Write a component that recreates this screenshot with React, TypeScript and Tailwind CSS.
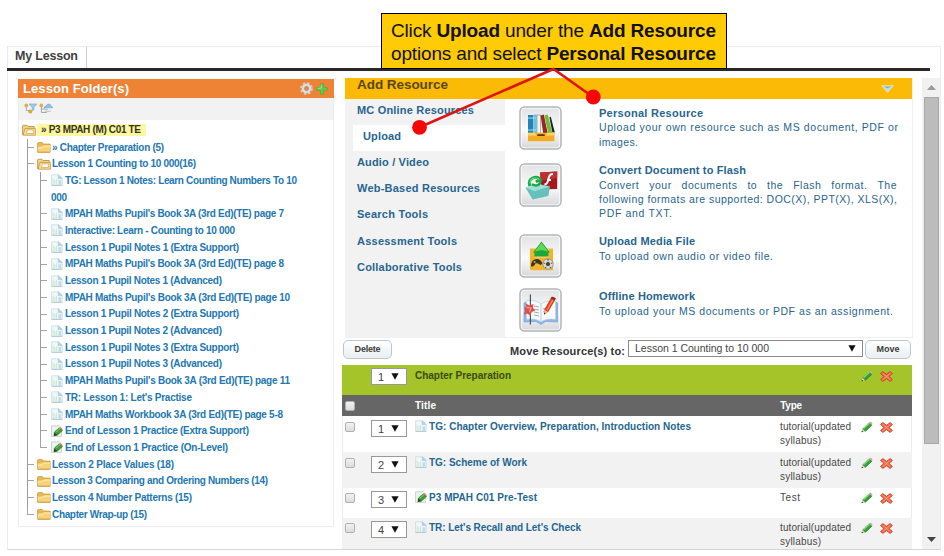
import { useLayoutEffect, useRef, useState, type ReactNode } from "react";

/** One line of text whose tracking is adjusted so that it spans `w` pixels. */
function Fit({ w, className = "", children }: { w: number; className?: string; children: ReactNode }) {
  const ref = useRef<HTMLSpanElement>(null);
  const [tracking, setTracking] = useState(0);
  useLayoutEffect(() => {
    const el = ref.current;
    if (!el) return;
    el.style.letterSpacing = "0px";
    const natural = el.getBoundingClientRect().width;
    const count = (el.textContent ?? "").length;
    const next = (w - natural) / Math.max(count - 1, 1);
    el.style.letterSpacing = `${next}px`;
    setTracking(next);
  }, [w]);
  return (
    <span ref={ref} className={`inline-block whitespace-nowrap ${className}`} style={{ letterSpacing: `${tracking}px` }}>
      {children}
    </span>
  );
}

function OpenFolder() {
  return (
    <svg className="h-[12px] w-[14px] shrink-0" viewBox="0 0 14 12">
      <path d="M.6 11V2.2Q.6 1.3 1.5 1.3H5l1 1.2h6.2v2" fill="#f3d58a" stroke="#b98a32" strokeWidth=".8" />
      <path d="M1 11.2 3 4.4h10.4v6.8z" fill="#f7dc96" stroke="#c4953d" strokeWidth=".8" />
      <path d="M5.4 5.9h6v3.6H4.4z" fill="#fffdf4" stroke="#c9a050" strokeWidth=".6" />
    </svg>
  );
}

function Folder() {
  return (
    <svg className="h-[12px] w-[14px] shrink-0" viewBox="0 0 14 12">
      <path d="M.6 11V2.6Q.6 1.6 1.6 1.6h3.6l1.2 1.5h6.7V11z" fill="#e9b94f" stroke="#c9973a" strokeWidth=".8" />
      <path d="M.8 11V5.4l5.3-.4 1-1h6.1v7z" fill="#f6d27a" />
      <path d="M1 7.4q5-.2 6-2.2h6.2" fill="none" stroke="#fdebb8" strokeWidth=".9" />
      <path d="M.6 11.2h12.7" stroke="#c9912f" strokeWidth=".9" />
    </svg>
  );
}

function Doc() {
  return (
    <svg className="h-[12px] w-[12px] shrink-0" viewBox="0 0 12 12">
      <path d="M.6.8h7l3.6 3.4v7.2H.6z" fill="#f1f8fb" stroke="#c6dbe6" strokeWidth=".8" />
      <path d="M7.2.8v3.8h4z" fill="#a9d6ee" stroke="#9ec5d9" strokeWidth=".5" />
      <path d="M2.2 4.6v6.2M3.9 6v4.8M5.6 5v5.8" stroke="#cbe5c6" strokeWidth=".9" />
      <path d="M7.4 6.2h2.8v4.6H7.4z" fill="#c2dcee" />
      <path d="M.6 11.4h10.6" stroke="#a9c4d4" strokeWidth=".8" />
    </svg>
  );
}

function DocPencil() {
  return (
    <svg className="h-[12px] w-[12px] shrink-0" viewBox="0 0 12 12">
      <path d="M.6.8h7.6l2.2 2v8.6H.6z" fill="#eef6ee" stroke="#b9cbc0" strokeWidth=".8" />
      <path d="M3 10.6 3.4 7 8.2 2.8l3.4 2.8-5.2 4.6z" fill="#3c9c3a" stroke="#286b2b" strokeWidth=".5" />
      <path d="m8.1 2.9 3.3 2.7.5-1.2-2.4-2.4z" fill="#e37a63" />
      <path d="m2.6 11 .9-3.4 2.7 2.5z" fill="#3a3328" />
      <path d="m4.6 7.6 4.6-4.2" stroke="#8ed67a" strokeWidth=".9" />
    </svg>
  );
}

function Pencil() {
  return (
    <svg className="h-[12px] w-[12px]" viewBox="0 0 12 12">
      <path d="m1 10.6.7-3L8.2 1.4l2.9 2.4-6.6 6.4z" fill="#37a03a" />
      <path d="m4.4 10.2 6.7-6.2" stroke="#237a2b" strokeWidth=".8" />
      <path d="M2.6 7.6 8.4 2.2" stroke="#8edb7c" strokeWidth="1.2" />
      <path d="m8 1.6 1-.9q1.6-.2 2.4 1.5l-.5 1.7z" fill="#c4ada6" />
      <path d="m.6 11 .9-3.1 2.4 2.3z" fill="#dfe3b8" />
      <path d="m.5 11.3.4-1.6 1.3 1.1z" fill="#222" />
    </svg>
  );
}

function Cross() {
  return (
    <svg className="h-[11px] w-[13px]" viewBox="0 0 13 11">
      <path
        d="M.7 2.6 2.7.6 6.5 3.4 10.3.6l2 2-3.4 2.9 3.4 2.9-2 2-3.8-2.8-3.8 2.8-2-2 3.4-2.9z"
        fill="#f4714d"
        stroke="#cf3a24"
        strokeWidth="1"
        strokeLinejoin="round"
      />
      <path d="m2.6 2.2 7.8 6.6M10.4 2.2 2.6 8.8" stroke="#fba583" strokeWidth=".7" />
    </svg>
  );
}

/** Connector of a tree row: an elbow, carried on downwards unless the row is the last one. */
function Guide({ last = false }: { last?: boolean }) {
  return (
    <div className={`flex h-full w-[10px] shrink-0 flex-col ${last ? "" : "border-l border-[#9c9c9c]"}`}>
      <div className={`h-[9px] border-b border-[#a4a4a4] ${last ? "w-[7px] border-l" : "w-[6px]"}`} />
    </div>
  );
}

type Leaf = { text: string; w: number; rest?: string; pencil?: boolean };

const leaves: Leaf[] = [
  { text: "TG: Lesson 1 Notes: Learn Counting Numbers To 10", w: 232, rest: "000" },
  { text: "MPAH Maths Pupil's Book 3A (3rd Ed)(TE) page 7", w: 219 },
  { text: "Interactive: Learn - Counting to 10 000", w: 170 },
  { text: "Lesson 1 Pupil Notes 1 (Extra Support)", w: 174 },
  { text: "MPAH Maths Pupil's Book 3A (3rd Ed)(TE) page 8", w: 219 },
  { text: "Lesson 1 Pupil Notes 1 (Advanced)", w: 157 },
  { text: "MPAH Maths Pupil's Book 3A (3rd Ed)(TE) page 10", w: 225 },
  { text: "Lesson 1 Pupil Notes 2 (Extra Support)", w: 174 },
  { text: "Lesson 1 Pupil Notes 2 (Advanced)", w: 157 },
  { text: "Lesson 1 Pupil Notes 3 (Extra Support)", w: 174 },
  { text: "Lesson 1 Pupil Notes 3 (Advanced)", w: 157 },
  { text: "MPAH Maths Pupil's Book 3A (3rd Ed)(TE) page 11", w: 225 },
  { text: "TR: Lesson 1: Let's Practise", w: 127 },
  { text: "MPAH Maths Workbook 3A (3rd Ed)(TE) page 5-8", w: 218 },
  { text: "End of Lesson 1 Practice (Extra Support)", w: 184, pencil: true },
  { text: "End of Lesson 1 Practice (On-Level)", w: 163, pencil: true },
];

const folders = [
  { text: "Lesson 2 Place Values (18)", w: 122 },
  { text: "Lesson 3 Comparing and Ordering Numbers (14)", w: 216 },
  { text: "Lesson 4 Number Patterns (15)", w: 140 },
  { text: "Chapter Wrap-up (15)", w: 95 },
];

function LessonFolders() {
  return (
    <section className="h-[448px] w-[316px] shrink-0 border border-[#ececec]">
      <header className="-mx-px -mt-px flex h-[19px] items-center justify-between bg-[#ee8235] pl-[5px] pr-[6px]">
        <Fit w={106} className="text-[13px] font-bold leading-[19px] text-white">Lesson Folder(s)</Fit>
        <div className="flex items-center gap-[3px]">
          <svg className="h-[13px] w-[13px]" viewBox="0 0 13 13">
            <circle cx="6.5" cy="6.5" r="5.3" fill="none" stroke="#cfcfcf" strokeWidth="2.2" strokeDasharray="2.3 1.86" />
            <circle cx="6.5" cy="6.5" r="3.5" fill="none" stroke="#dcdcdc" strokeWidth="2.6" />
            <circle cx="6.5" cy="6.5" r="1.9" fill="#e08a4a" stroke="#9a9693" strokeWidth=".6" />
          </svg>
          <svg className="h-[12px] w-[12px]" viewBox="0 0 12 12">
            <path d="M4.5.8h3v3.7h3.7v3H7.5v3.7h-3V7.5H.8v-3h3.7z" fill="#62c94b" stroke="#4bae3c" strokeWidth=".7" />
            <path d="M5.2 1.6v3.6H1.6" stroke="#b4ee9d" strokeWidth=".8" fill="none" />
          </svg>
        </div>
      </header>
      <div className="flex h-[22px] items-start gap-[2px] bg-[#f2f2f2] pl-[5px] pt-[5px]">
        <svg className="h-[11px] w-[13px]" viewBox="0 0 13 11">
          <path d="M2.4 3v4.5h3" stroke="#999" fill="none" strokeWidth=".8" />
          <circle cx="2.3" cy="2.5" r="1.9" fill="#dfb04a" />
          <circle cx="6.3" cy="8.5" r="2.1" fill="#d8a93f" />
          <path d="M5 .9h7.8L10 4.6v2.2l-1.8.7V4.6z" fill="#9ccbe9" stroke="#6d9fc4" strokeWidth=".5" />
        </svg>
        <svg className="h-[11px] w-[14px]" viewBox="0 0 14 11">
          <path d="M2.4 3v6.5h5.4M2.4 6h4" stroke="#a0a0a0" fill="none" strokeWidth=".9" />
          <circle cx="2.3" cy="2.5" r="1.9" fill="#dfb04a" />
          <path d="M5 4.8q.3-1.7 2-1.7 1-2.3 3-2 2 .3 2 2.1 1.5.1 1.6 1.6z" fill="#8fc4ea" stroke="#5b93bf" strokeWidth=".5" />
          <path d="M5.8 8.2h6M5.8 6.4h3" stroke="#b7b7b7" strokeWidth=".9" />
        </svg>
      </div>
      <div className="pl-[3px] pt-[2px] text-[10px] font-bold text-[#2377b1]">
        <div className="flex h-[16.7px] items-center">
          <OpenFolder />
          <div className="ml-px flex h-[12px] w-[109px] items-center bg-[#fdf7a0] pl-[4px] text-[#35351c]">
            <Fit w={100} className="leading-[12px]">» P3 MPAH (M) C01 TE</Fit>
          </div>
        </div>
        <div className="pl-[5px]">
          <div className="flex h-[16.7px] items-center">
            <Guide />
            <Folder />
            <Fit w={112} className="ml-[1px]">» Chapter Preparation (5)</Fit>
          </div>
          <div className="flex h-[16.7px] items-center">
            <Guide />
            <OpenFolder />
            <Fit w={144} className="ml-[1px]">Lesson 1 Counting to 10 000(16)</Fit>
          </div>
          <div className="border-l border-[#9c9c9c] pl-[12px]">
            {leaves.map((leaf, i) => (
              <div key={leaf.text} className={`flex ${leaf.rest ? "h-[33.4px]" : "h-[16.7px]"}`}>
                <Guide last={i === leaves.length - 1} />
                <div className="ml-px">
                  <div className="flex h-[16.7px] items-center gap-[2px]">
                    {leaf.pencil ? <DocPencil /> : <Doc />}
                    <Fit w={leaf.w}>{leaf.text}</Fit>
                  </div>
                  {leaf.rest && (
                    <div className="flex h-[16.7px] items-center">
                      <Fit w={16}>{leaf.rest}</Fit>
                    </div>
                  )}
                </div>
              </div>
            ))}
          </div>
          {folders.map((folder, i) => (
            <div key={folder.text} className="flex h-[16.7px] items-center">
              <Guide last={i === folders.length - 1} />
              <Folder />
              <Fit w={folder.w} className="ml-[1px]">{folder.text}</Fit>
            </div>
          ))}
        </div>
      </div>
    </section>
  );
}

const menu = [
  { text: "MC Online Resources", w: 117 },
  { text: "Upload", w: 38, active: true },
  { text: "Audio / Video", w: 72 },
  { text: "Web-Based Resources", w: 123 },
  { text: "Search Tools", w: 71 },
  { text: "Assessment Tools", w: 100 },
  { text: "Collaborative Tools", w: 105 },
];

function Tile({ id, children }: { id: string; children: ReactNode }) {
  return (
    <svg className="h-[44px] w-[43px]" viewBox="0 0 43 44">
      <defs>
        <linearGradient id={id} x1="0" y1="0" x2="0" y2="1">
          <stop offset="0" stopColor="#e3e4e6" />
          <stop offset=".55" stopColor="#fafafa" />
          <stop offset="1" stopColor="#d9dadc" />
        </linearGradient>
      </defs>
      <rect x="1" y="1" width="41" height="42" rx="4.5" fill="#fff" stroke="#b2b4b7" strokeWidth="1.5" />
      <rect x="2.6" y="2.6" width="37.8" height="38.8" rx="3" fill={`url(#${id})`} />
      {children}
    </svg>
  );
}

function BooksIcon() {
  return (
    <Tile id="books">
      <path d="M9 9h5.4v19H9z" fill="#2383b5" />
      <path d="M14.8 8.6h2.8V28h-2.8z" fill="#60c5e4" />
      <path d="M9 12h8.4M9 24h8.4" stroke="#9fe0f3" strokeWidth="1.2" />
      <path d="M18 9h3.6v19H18z" fill="#f4f4ee" stroke="#444" strokeWidth=".4" />
      <path d="m21.6 9.4 3.2-.8 4 19h-4.6z" fill="#9b2521" />
      <path d="m25.4 9.2 3.4-.8 4.6 18.8h-4.2z" fill="#74bb3c" />
      <path d="m30.4 11.2 1.4-.5 4 15.8h-2.4z" fill="#222" />
      <path d="M9 26.8h26.4v7.6q0 .9-.9.9H9.8q-.8 0-.8-.9z" fill="#f2ac24" />
      <path d="M9 26.8h7q.4 2.4 2.4 2.4h7.4q1.8 0 2.2-2.4h7.4v2.6H9z" fill="#fbd468" />
      <path d="M19 29.2h6" stroke="#5b3a10" strokeWidth="1.8" strokeLinecap="round" />
    </Tile>
  );
}

function FlashIcon() {
  return (
    <Tile id="flash">
      <path d="m21 9.4 17.2-1V26l-15.6.6z" fill="#a3191d" />
      <path d="m21 9.4 17.2-1v6.4l-16.6 3z" fill="#bf2f31" />
      <path d="M34 11q-3.6 0-4.5 4.6-.9 5.6-4.1 5.9M28 17h4" stroke="#fff" strokeWidth="2" fill="none" />
      <path d="m6.4 24.4 12 1.2 12.6-2.4-1.6 9.8-15.8 3.4z" fill="#68c0bd" />
      <path d="m6.4 24.4 12-3.4 12.6 2.2-15.6 5z" fill="#9be0da" />
      <path d="M10.8 23Q8.8 17 14 14.8q5.4-1.8 7.2 2.2l-4.4 1.6" fill="none" stroke="#1ba648" strokeWidth="3" />
      <path d="m12.6 21.4 4.4 1.2q4.6-.6 4.6-5.6" fill="none" stroke="#1ba648" strokeWidth="2.4" />
      <path d="M11 20.6q-.2-4.4 4-5.5 4-.7 5.4 1.8" fill="none" stroke="#61dd78" strokeWidth="1.1" />
    </Tile>
  );
}

function MediaIcon() {
  return (
    <Tile id="media">
      <path d="M11 14.6h23v21.6H12.4q-1.4 0-1.4-1.4z" fill="#f4b52c" />
      <path d="M16 14.6h14v9H16z" fill="#f8d77e" />
      <path d="M22.5 7.6 31 18.6h-1.4v4H15.4v-4H14z" fill="#1fa638" />
      <path d="m22.5 8.8 6.6 8.6-6.6-1.4-6.6 1.4z" fill="#5fd858" />
      <path d="M12 32.6q-.2-6.4 4.6-7.4 5-.8 6.8 4.6l-2 1.2q-2-2.4-5-1.6-.9 3-4.4 3.2z" fill="#3b3428" />
      <circle cx="15.6" cy="28" r="1.1" fill="#b5a689" />
      <circle cx="29" cy="30" r="5.2" fill="#dad9d4" stroke="#777" strokeWidth=".6" />
      <path d="m29 28 1.8 1.4-.7 2.1h-2.2l-.7-2.1zM29 25v1.6M24.6 29l1.2.4M32.2 29.4l1.2-.4M26.4 34l.8-1.2M31.8 34l-.8-1.2" fill="#444" stroke="#444" strokeWidth="1" />
    </Tile>
  );
}

function HomeworkIcon() {
  return (
    <Tile id="homework">
      <path d="m5 15 2-1v17l10-1 5 3.6 5-3.6 10 1V14l1.6 1v19l-12-.6-4.6 3-5-3L5 34z" fill="#8fb8e8" stroke="#7ea8de" strokeWidth=".8" />
      <path d="M7.6 12.6q9-1.2 14.4 3.4 6-4 14.6-2.6v18q-9.4-1.2-14.6 2.6-5-4-14.4-2.6z" fill="#f7fafc" stroke="#b6cbe2" strokeWidth=".7" />
      <path d="M22 16v18" stroke="#bccbdd" strokeWidth="1" />
      <path d="m15 18 5 1M15 21l5 1M15 24l5 1M15 27l5 1M24 21l4-1.2M24 24l3-1" stroke="#a9a9a9" strokeWidth="1" />
      <path d="M11.4 6.6v30" stroke="#4f5356" strokeWidth="1.2" />
      <path d="m6.6 15.6 4 1.8 3.8-1.4-.4 4 2.4 2.6-3.8 1.4-1.2 3.6-3.2-2-3.4 1 1.4-4-1.2-3.4 2.6.2z" fill="#dd4f4b" />
      <path d="m8 19.6 4 .4-1.6 4" stroke="#f5a39c" strokeWidth="1.2" fill="none" />
      <path d="m25 26.4.4-4.8 6.8-12 4 2.2-6.8 12z" fill="#dd4020" />
      <path d="m28 22.2 6.4-11.4" stroke="#f88f60" strokeWidth="1.3" />
      <path d="m25 26.4.4-4.6 3.6 2.2z" fill="#e7c48e" />
      <path d="m25 26.4.1-1.9 1.4 1z" fill="#222" />
      <path d="m31.6 10.6 1-1.8q2.4-.4 4.2 1.8l-1 1.8z" fill="#8b2a1a" />
    </Tile>
  );
}

function AddResource() {
  return (
    <section className="h-[260px] w-[568px] border-b border-r border-[#f0f0f0]">
      <header className="flex h-[21px] w-[567px] justify-between bg-[#fbba05] pl-[12px] pr-[18px]">
        <Fit w={91} className="text-[13.5px] font-bold leading-[13px] text-[#594717]">Add Resource</Fit>
        <svg className="mt-[7px] h-[8px] w-[13px]" viewBox="0 0 13 8">
          <path d="M.8.8h11.4L6.5 7.3z" fill="#b9dfe6" stroke="#e6efd8" strokeWidth=".8" />
          <path d="M2 1.4h9L6.5 3.2z" fill="#8cadb1" />
        </svg>
      </header>
      <div className="flex text-[#27658f]">
        <nav className="h-[238px] w-[160px] bg-[#f2f2f2] pl-[8px] text-[11px] font-bold">
          {menu.map((item) => (
            <div
              key={item.text}
              className={`flex h-[26.15px] items-center ${item.active ? "bg-white pl-[10px] pb-[4px]" : "pb-[4px] pl-[4px]"}`}
            >
              <Fit w={item.w}>{item.text}</Fit>
            </div>
          ))}
        </nav>
        <div className="flex w-[94px] flex-col pl-[14px] pt-[7px]">
          <BooksIcon />
          <div className="mt-[13px]"><FlashIcon /></div>
          <div className="mt-[27px]"><MediaIcon /></div>
          <div className="mt-[10px]"><HomeworkIcon /></div>
        </div>
        <div className="flex w-[299px] flex-col text-[10.5px] leading-[14.4px]">
          <div className="mt-[7px] flex flex-col items-start">
            <Fit w={104} className="text-[11px] font-bold">Personal Resource</Fit>
            <Fit w={299}>Upload your own resource such as MS document, PDF or</Fit>
            <Fit w={39}>images.</Fit>
          </div>
          <div className="mt-[14px] flex flex-col items-start">
            <Fit w={147} className="text-[11px] font-bold">Convert Document to Flash</Fit>
            <div className="flex w-[298px] justify-between tracking-[0.5px]">
              {"Convert your documents to the Flash format. The".split(" ").map((word) => (
                <span key={word}>{word}</span>
              ))}
            </div>
            <Fit w={298}>following formats are supported: DOC(X), PPT(X), XLS(X),</Fit>
            <Fit w={73}>PDF and TXT.</Fit>
          </div>
          <div className="mt-[13.5px] flex flex-col items-start">
            <Fit w={96} className="text-[11px] font-bold">Upload Media File</Fit>
            <Fit w={174}>To upload own audio or video file.</Fit>
          </div>
          <div className="mt-[26px] flex flex-col items-start">
            <Fit w={96} className="text-[11px] font-bold">Offline Homework</Fit>
            <Fit w={294}>To upload your MS documents or PDF as an assignment.</Fit>
          </div>
        </div>
      </div>
    </section>
  );
}

function Arrow() {
  return (
    <svg className="h-[7px] w-[8px]" viewBox="0 0 8 7">
      <path d="M.4.3h7.2L4 6.8z" fill="#111" />
    </svg>
  );
}

function Order({ n }: { n: number }) {
  return (
    <div className="flex h-[17px] w-[36px] items-center justify-between border border-[#999] bg-white pl-[6px] pr-[7px] text-[11px] leading-[15px] text-[#444]">
      <span className="pt-[2px]">{n}</span>
      <Arrow />
    </div>
  );
}

function Check() {
  return <div className="h-[10px] w-[10px] rounded-[2px] border border-[#b0b0b0] bg-gradient-to-b from-[#f2f2f2] to-[#dcdcdc]" />;
}

function Actions() {
  return (
    <div className="flex w-[51px] items-start gap-[7px]">
      <Pencil />
      <div className="pt-px"><Cross /></div>
    </div>
  );
}

type Row = { title: string; w: number; type: string; pencil?: boolean; height: string; pad: string };

const rows: Row[] = [
  { title: "TG: Chapter Overview, Preparation, Introduction Notes", w: 262, type: "tutorial", height: "h-[36px]", pad: "pt-[4px]" },
  { title: "TG: Scheme of Work", w: 98, type: "tutorial", height: "h-[36px] bg-[#f2f2f2]", pad: "pt-[4px]" },
  { title: "P3 MPAH C01 Pre-Test", w: 108, type: "Test", pencil: true, height: "h-[30px]", pad: "pt-[3px]" },
  { title: "TR: Let's Recall and Let's Check", w: 152, type: "tutorial", height: "h-[31px] bg-[#f2f2f2]", pad: "pt-[3px]" },
];

function ResourceTable() {
  return (
    <div className="mt-[6px] w-[570px] border-x border-[#ececec] text-[10.5px]">
      <div className="-mx-px flex h-[30px] items-start bg-[#a4c42a] pl-[29px] pt-[3px]">
        <Order n={1} />
        <Fit w={96} className="ml-[8px] text-[10px] font-bold leading-[15px] text-[#3b4a17]">Chapter Preparation</Fit>
        <div className="ml-auto pt-[2px]"><Actions /></div>
      </div>
      <div className="-mx-px flex h-[21px] items-center bg-[#666] pl-[3px] text-[10px] font-bold text-white">
        <Check />
        <Fit w={21} className="ml-[60px]">Title</Fit>
        <Fit w={22} className="ml-[344px]">Type</Fit>
      </div>
      {rows.map((row, i) => (
        <div key={row.title} className={`-mx-px flex items-start pl-[3px] ${row.height} ${row.pad}`}>
          <div className="pt-[2px]"><Check /></div>
          <div className="ml-[16px]"><Order n={i + 1} /></div>
          <div className="ml-[8px] flex w-[365px] items-start gap-[2px] text-[10px] font-bold text-[#1f6690]">
            {row.pencil ? <DocPencil /> : <Doc />}
            <Fit w={row.w} className="leading-[13px]">{row.title}</Fit>
          </div>
          <div className="flex w-[80px] flex-col items-start text-[10px] leading-[14.2px] text-[#484848]">
            {row.type === "Test" ? (
              <Fit w={20}>Test</Fit>
            ) : (
              <>
                <Fit w={71}>tutorial(updated</Fit>
                <Fit w={41}>syllabus)</Fit>
              </>
            )}
          </div>
          <div className="ml-auto pt-px"><Actions /></div>
        </div>
      ))}
    </div>
  );
}

function Button({ children, w, className }: { children: string; w: number; className: string }) {
  return (
    <div
      className={`flex h-[19px] items-center justify-center rounded-[5px] border border-[#bcc7d2] bg-gradient-to-b from-white to-[#e9eef2] text-[9px] font-bold text-[#3c3c3c] ${className}`}
    >
      <Fit w={w}>{children}</Fit>
    </div>
  );
}

export default function App() {
  return (
    <div className="relative h-[556px] w-[944px] overflow-hidden bg-white pl-[7px] pt-[46px] font-['Liberation_Sans',Arial,sans-serif]">
      <div className="h-[504px] w-[934px] border border-[#ececec] border-b-[#d6d6d6]">
        <div className="flex h-[21px] w-[79px] items-start border-r border-[#cfcfcf] pl-[7px]">
          <Fit w={63} className="text-[12.5px] font-bold leading-[18px] text-[#3f3f3f]">My Lesson</Fit>
        </div>
        <div className="-ml-px h-[3px] w-[923px] bg-[#2a2829]" />
        <div className="flex h-[478px] pl-[10px] pt-[7px]">
          <div className="pt-px"><LessonFolders /></div>
          <main className="ml-[8px] w-[570px]">
            <div className="pl-[3px]"><AddResource /></div>
            <div className="mt-[2px] flex h-[19px] items-start pl-px">
              <Button w={26} className="w-[49px]">Delete</Button>
              <div className="ml-[118px] w-[118px] pt-[4px] text-[11px] font-bold leading-[15px] text-[#333]">
                <Fit w={115}>Move Resource(s) to:</Fit>
              </div>
              <div className="flex h-[17px] w-[235px] items-center justify-between border border-[#8a8a8a] bg-white pl-[6px] pr-[6px] text-[10.5px] leading-[15px] text-[#444]">
                <Fit w={134}>Lesson 1 Counting to 10 000</Fit>
                <Arrow />
              </div>
              <Button w={23} className="ml-[2px] w-[46px]">Move</Button>
            </div>
            <ResourceTable />
          </main>
          <div className="ml-auto flex h-[471px] w-[18px] flex-col items-center bg-[#f1f1f1]">
            <div className="flex h-[19px] items-center">
              <svg className="h-[5px] w-[9px]" viewBox="0 0 9 5"><path d="M4.5 0 9 5H0z" fill="#9a9a9a" /></svg>
            </div>
            <div className="h-[347px] w-[15px] border border-[#a8a8a8] bg-[#bcbcbc]" />
            <div className="mt-auto flex h-[20px] items-center">
              <svg className="h-[5px] w-[9px]" viewBox="0 0 9 5"><path d="M0 0h9L4.5 5z" fill="#444" /></svg>
            </div>
          </div>
        </div>
      </div>

      <div className="absolute left-[381px] top-[13px] flex h-[56px] w-[346px] flex-col items-start border border-black bg-[#ffcb05] pl-[9px] pt-[5px] text-[19px] leading-[23px] text-[#111]">
        <Fit w={325}>Click <b>Upload</b> under the <b>Add Resource</b></Fit>
        <Fit w={325}>options and select <b>Personal Resource</b></Fit>
      </div>
      <svg className="absolute left-[400px] top-[60px] h-[90px] w-[220px]" viewBox="400 60 220 90">
        <path d="M419 127.5 553.5 69 593 97" fill="none" stroke="#de1414" strokeWidth="2.6" />
        <circle cx="419.5" cy="127.3" r="7.4" fill="#f60606" />
        <circle cx="593.3" cy="97" r="7.4" fill="#f60606" />
      </svg>
    </div>
  );
}
